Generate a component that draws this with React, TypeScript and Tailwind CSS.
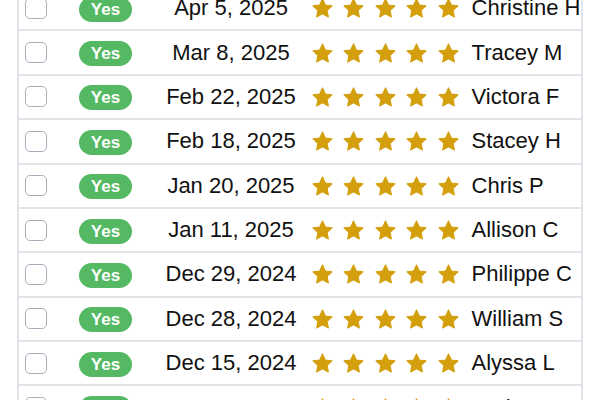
import React from "react";

const rows = [
  { date: "Apr 5, 2025", name: "Christine H" },
  { date: "Mar 8, 2025", name: "Tracey M" },
  { date: "Feb 22, 2025", name: "Victora F" },
  { date: "Feb 18, 2025", name: "Stacey H" },
  { date: "Jan 20, 2025", name: "Chris P" },
  { date: "Jan 11, 2025", name: "Allison C" },
  { date: "Dec 29, 2024", name: "Philippe C" },
  { date: "Dec 28, 2024", name: "William S" },
  { date: "Dec 15, 2024", name: "Alyssa L" },
  { date: "Dec 4, 2024", name: "Andrea T" },
];

function Star() {
  return (
    <svg width="21" height="20" viewBox="0 0 24 23" className="shrink-0">
      <path
        d="M12 1L15.29 7.97L22.94 8.95L17.33 14.23L18.76 21.8L12 18.1L5.24 21.8L6.67 14.23L1.06 8.95L8.71 7.97Z"
        fill="#d39f0c"
        stroke="#d39f0c"
        strokeWidth="1.2"
        strokeLinejoin="round"
      />
    </svg>
  );
}

export default function App() {
  return (
    <div className="w-[600px] h-[400px] overflow-hidden bg-white" style={{ fontFamily: '"Liberation Sans", Arial, sans-serif' }}>
      <div className="ml-[17px] w-[566px] mt-[-13px] border-x-2 border-[#e1e5ea]">
        {rows.map((r, i) => (
          <div
            key={i}
            className="h-[44.375px] border-b-2 border-[#e1e5ea] flex items-center text-[#111] bg-white"
          >
            <div className="ml-[6px] w-[22px] h-[21px] rounded-[5px] border-[1.5px] border-[#a7afba] bg-white shrink-0" />
            <div className="ml-[32px] w-[53px] h-[25px] mt-[2px] rounded-full bg-[#55b963] text-white font-bold text-[17px] leading-none flex items-center justify-center shrink-0">
              Yes
            </div>
            <div className="ml-[18px] w-[162px] text-center text-[22px] leading-[26px] shrink-0 whitespace-nowrap">
              {r.date}
            </div>
            <div className="flex items-center gap-[10.4px] shrink-0">
              <Star />
              <Star />
              <Star />
              <Star />
              <Star />
            </div>
            <div className="ml-[13px] text-[22px] leading-[26px] whitespace-nowrap">
              {r.name}
            </div>
          </div>
        ))}
      </div>
    </div>
  );
}
